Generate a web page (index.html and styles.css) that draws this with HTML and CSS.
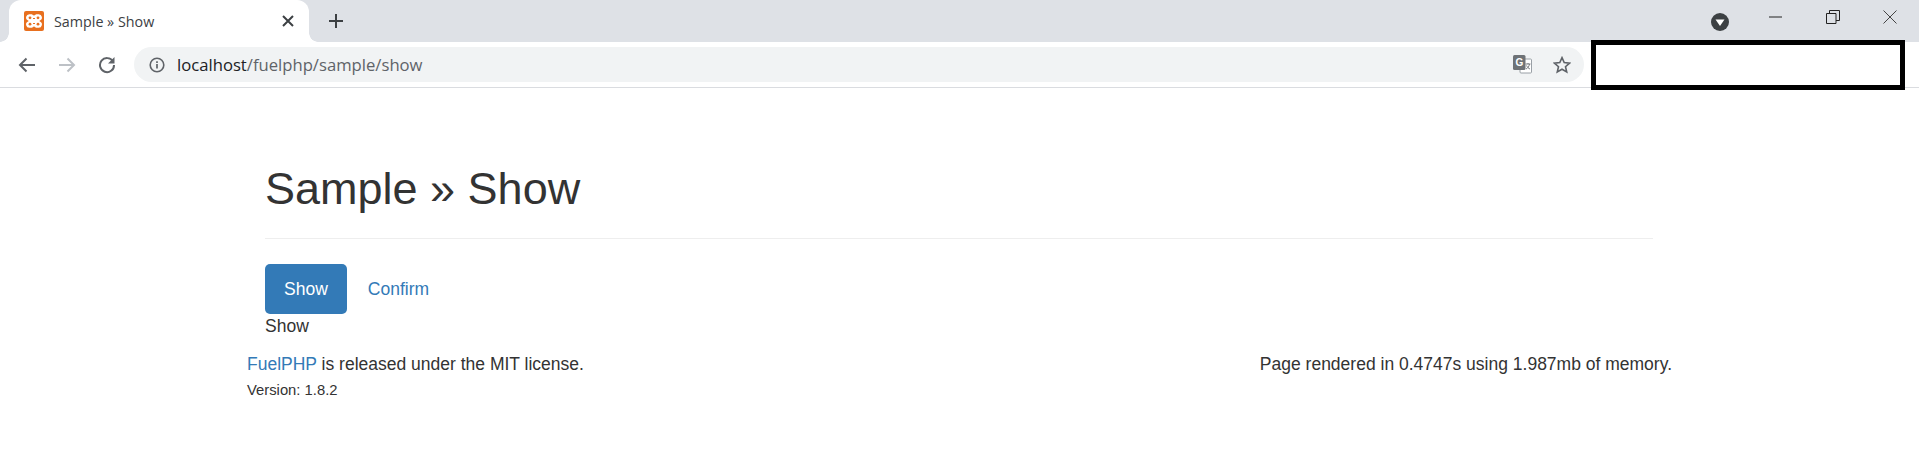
FILE: index.html
```html
<!DOCTYPE html>
<html lang="en">
<head>
<title>Sample » Show</title>
<meta charset="UTF-8">
<link rel="stylesheet" href="styles.css">
</head>
<body>

<!-- browser chrome -->
<div class="tabstrip">
	<div class="tab">
		<svg class="favicon" width="20" height="20" viewBox="0 0 20 20">
			<rect width="20" height="20" rx="2" fill="#e8701f"/>
			<path d="M5.500 3.200h2.200c1 0 1.200 1.300 2.300 1.300s1.300-1.300 2.300-1.300h2.200a3.300 3.300 0 0 1 1.500 6.300l-.8.500.8.500a3.300 3.300 0 0 1-1.500 6.300h-2.200c-1 0-1.200-1.300-2.300-1.300s-1.300 1.300-2.300 1.300H5.500A3.300 3.300 0 0 1 4 10.500l.8-.5-.8-.5a3.300 3.300 0 0 1 1.500-6.300z" fill="#fff"/>
			<circle cx="6" cy="6.800" r="1.400" fill="#e8701f"/>
			<circle cx="14" cy="6.800" r="1.400" fill="#e8701f"/>
			<circle cx="6" cy="13.200" r="1.400" fill="#e8701f"/>
			<circle cx="14" cy="13.200" r="1.400" fill="#e8701f"/>
			<path d="M9 7.500h2M9 12.500h2" stroke="#e8701f" stroke-width="1.200"/>
		</svg>
		<span class="tabTitle">Sample » Show</span>
		<svg class="tabClose" width="12" height="12" viewBox="0 0 12 12">
			<path d="M1 1l10 10M11 1L1 11" stroke="#3c4043" stroke-width="2"/>
		</svg>
	</div>
	<svg class="newTab" width="16" height="16" viewBox="0 0 16 16">
		<path d="M8 1v14M1 8h14" stroke="#3c4043" stroke-width="2"/>
	</svg>
	<div class="windowControls">
		<svg class="profile" width="18" height="18" viewBox="0 0 18 18">
			<circle cx="9" cy="9" r="9" fill="#3c4043"/>
			<path d="M4.500 6.500h9L9 13z" fill="#fff"/>
		</svg>
		<div class="winButtons">
			<svg width="14" height="14" viewBox="0 0 14 14"><path d="M0 7h13" stroke="#222" stroke-width="1"/></svg>
			<svg width="14" height="14" viewBox="0 0 14 14"><path d="M.5 3.500h9.500v10H.5zM3.500 3.500V.5h10v10H10" fill="none" stroke="#222" stroke-width="1"/></svg>
			<svg width="14" height="14" viewBox="0 0 14 14"><path d="M.5.5l13 13M13.500.5l-13 13" stroke="#444" stroke-width="1"/></svg>
		</div>
	</div>
</div>

<div class="toolbar">
	<svg class="navIcon" width="18" height="16" viewBox="0 0 18 16">
		<path d="M17 8H2M8.500 1.500L2 8l6.500 6.500" fill="none" stroke="#5f6368" stroke-width="2"/>
	</svg>
	<svg class="navIcon" width="18" height="16" viewBox="0 0 18 16">
		<path d="M1 8h15M9.500 1.500L16 8l-6.500 6.500" fill="none" stroke="#bdc1c6" stroke-width="2"/>
	</svg>
	<svg class="navIcon" width="18" height="18" viewBox="0 0 18 18">
		<path d="M15 5.500A7 7 0 1 0 16 9" fill="none" stroke="#5f6368" stroke-width="2"/>
		<path d="M16.500 1v6.500H10z" fill="#5f6368"/>
	</svg>
	<div class="omnibox">
		<svg width="16" height="16" viewBox="0 0 16 16">
			<circle cx="8" cy="8" r="6.800" fill="none" stroke="#5f6368" stroke-width="1.600"/>
			<path d="M8 7v4.500M8 4.300v1.600" stroke="#5f6368" stroke-width="1.700"/>
		</svg>
		<span class="url"><span class="urlHost">localhost</span>/fuelphp/sample/show</span>
		<svg class="translate" width="19" height="19" viewBox="0 0 19 19">
			<rect x="7" y="4" width="11.500" height="14" rx="1" fill="#fff" stroke="#9aa0a6"/>
			<rect x="0" y="0" width="12.500" height="15" rx="1.500" fill="#6e7276"/>
			<text x="2.500" y="11" class="translateG">G</text>
			<path d="M12.500 9h5M15 8v1M16.500 9c-.5 2.500-1.500 4-3.500 5M13.500 10.500c.8 1.500 2 3 3.500 3.500" fill="none" stroke="#6e7276" stroke-width=".9"/>
		</svg>
		<svg width="18" height="18" viewBox="0 0 18 18">
			<path d="M9 1.700l2.200 4.900 5.300.6-4 3.500 1.200 5.200L9 13.200l-4.700 2.700 1.200-5.200-4-3.500 5.300-.6z" fill="none" stroke="#5f6368" stroke-width="1.600"/>
		</svg>
	</div>
	<!-- blanked out area of the screenshot -->
	<div class="redacted"></div>
</div>

<div class="page">
	<div class="content">
		<h1 class="pageTitle">Sample » Show</h1>
		<ul class="nav">
			<li><a class="navItem navItemActive">Show</a></li>
			<li><a class="navItem">Confirm</a></li>
		</ul>
		<p class="body">Show</p>
	</div>
	<div class="footer">
		<div>
			<p class="license"><a class="link">FuelPHP</a> is released under the MIT license.</p>
			<p class="version">Version: 1.8.2</p>
		</div>
		<p class="rendered">Page rendered in 0.4747s using 1.987mb of memory.</p>
	</div>
</div>

</body>
</html>
```

FILE: styles.css
```css
* {
	box-sizing: border-box;
}
html, body {
	margin: 0;
	padding: 0;
}
body {
	font-family: "Liberation Sans", Arial, sans-serif;
	font-size: 17.5px;
	color: #333;
	background: #fff;
	height: 455px;
	overflow: hidden;
}
p {
	margin: 0;
}

.tabstrip {
	display: flex;
	align-items: center;
	height: 42px;
	padding-left: 9px;
	background: #dee1e6;
}
.tab {
	position: relative;
	display: flex;
	align-items: center;
	width: 300px;
	height: 42px;
	padding: 0 15px 0 15px;
	background: #fff;
	border-radius: 12px 12px 0 0;
}
/* concave corners where the tab meets the toolbar */
.tab::before, .tab::after {
	content: "";
	position: absolute;
	bottom: 0;
	width: 9px;
	height: 9px;
}
.tab::before {
	left: -9px;
	background: radial-gradient(circle at 0 0, transparent 8.500px, #fff 9px);
}
.tab::after {
	right: -9px;
	background: radial-gradient(circle at 100% 0, transparent 8.500px, #fff 9px);
}
.favicon {
	flex: none;
	margin-right: 10px;
}
.tabTitle {
	flex: 1;
	font-family: "Open Sans", "Noto Sans", sans-serif;
	font-size: 14.300px;
	color: #3c4043;
}
.newTab {
	margin-left: 19px;
}
.windowControls {
	display: flex;
	align-items: center;
	margin-left: auto;
}
.profile {
	margin-top: 1px;
	margin-right: 40px;
}
.winButtons {
	display: flex;
	align-items: center;
	gap: 43px;
	padding-right: 22px;
	margin-top: -8px;
}

.toolbar {
	display: flex;
	align-items: center;
	height: 46px;
	padding-left: 18px;
	border-bottom: 1px solid #dadce0;
	gap: 22px;
}
.omnibox {
	display: flex;
	align-items: center;
	flex: none;
	width: 1450px;
	height: 35px;
	margin-left: -4px;
	padding: 0 13px 0 15px;
	background: #f1f3f4;
	border-radius: 18px;
	gap: 12px;
}
.url {
	flex: 1;
	font-family: "Open Sans", "Noto Sans", sans-serif;
	font-size: 16.670px;
	color: #5f6368;
}
.urlHost {
	color: #202124;
}
.translate {
	margin-right: 9px;
}
.translateG {
	font-family: "Liberation Sans", sans-serif;
	font-size: 10px;
	font-weight: bold;
	fill: #fff;
}
.redacted {
	flex: none;
	width: 314px;
	height: 50px;
	margin-left: -15px;
	margin-top: 1px;
	border: 5px solid #000;
	background: #fff;
}

.page {
	width: 1425px;
	margin: 0 auto;
}
.content {
	padding: 0 19px 0 18px;
}
.pageTitle {
	margin: 76px 0 25px;
	padding-bottom: 24px;
	font-size: 45px;
	font-weight: 400;
	line-height: 1.1;
	border-bottom: 1px solid #eee;
}
.nav {
	display: flex;
	gap: 2px;
	margin: 0;
	padding: 0;
	list-style: none;
}
.navItem {
	display: block;
	padding: 12px 19px;
	line-height: 26px;
	color: #337ab7;
	border-radius: 5px;
}
.navItemActive {
	color: #fff;
	background: #337ab7;
}
.body {
	line-height: 24px;
}
.footer {
	display: flex;
	justify-content: space-between;
	margin-top: 14px;
}
.link {
	color: #337ab7;
}
.license {
	line-height: 24px;
}
.version {
	font-size: 14.800px;
	line-height: 24px;
	margin-top: 2px;
}
.rendered {
	line-height: 24px;
}
```
